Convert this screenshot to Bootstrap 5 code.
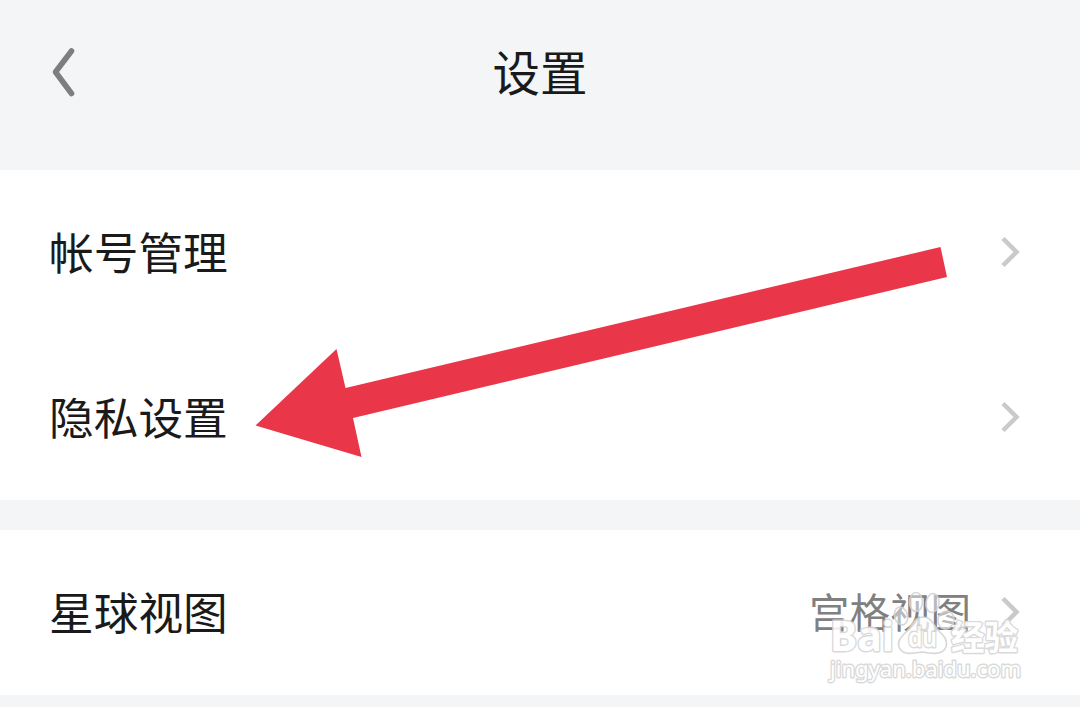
<!DOCTYPE html>
<html lang="zh-CN">

<head>
    <meta charset="UTF-8">
    <meta name="viewport" content="width=device-width, initial-scale=1.0">
    <title>设置</title>
    <link href="https://cdn.jsdelivr.net/npm/bootstrap@5.3.0/dist/css/bootstrap.min.css" rel="stylesheet">
    <style>
        body {
            background-color: #f4f5f7;
            color: #1a1a1a;
            font-family: "Noto Sans CJK SC", sans-serif;
            overflow: hidden;
        }

        .page-header {
            height: 170px;
            padding: 0 50px 24px;
        }

        .page-title {
            font-size: 47.5px;
            line-height: 70px;
            font-weight: 400;
            padding-bottom: 5px;
        }

        .side-slot {
            width: 100px;
        }

        .settings-group {
            --bs-list-group-color: #1a1a1a;
            --bs-list-group-bg: #fff;
            margin-bottom: 30px;
        }

        .settings-item {
            height: 165px;
            padding: 0 60px 2px 49px;
            border: 0;
            font-size: 44.7px;
            line-height: 66px;
        }

        .settings-item span {
            padding-bottom: 1px;
        }

        .settings-item .item-value {
            font-size: 40.5px;
            color: #808080;
            margin-right: 29px;
            padding-bottom: 2px;
        }

        .overlay {
            pointer-events: none;
            z-index: 5;
        }

        .watermark text {
            fill: #fff;
            stroke: #d6d6d6;
            stroke-width: 2.8;
            stroke-linejoin: round;
            paint-order: stroke;
            font-family: "Noto Sans", "Noto Sans CJK SC", sans-serif;
        }
    </style>
</head>

<body>
    <div class="position-relative vh-100 overflow-hidden">
        <header class="page-header d-flex align-items-center justify-content-between">
            <a href="#" class="side-slot d-flex" aria-label="返回">
                <svg width="28" height="52" viewBox="0 0 28 52" fill="none" stroke="#7d7e80" stroke-width="5.6"
                    stroke-linecap="round" stroke-linejoin="round">
                    <path d="M21.5 4L5.5 25L21.5 46.5" />
                </svg>
            </a>
            <h1 class="page-title mb-0">设置</h1>
            <div class="side-slot"></div>
        </header>

        <div class="list-group list-group-flush settings-group">
            <a href="#" class="list-group-item settings-item d-flex align-items-center justify-content-between">
                <span>帐号管理</span>
                <svg width="20" height="32" viewBox="0 0 20 32" fill="none" stroke="#cacaca" stroke-width="4.5">
                    <path d="M3 2.5L16.5 16L3 29.5" />
                </svg>
            </a>
            <a href="#" class="list-group-item settings-item d-flex align-items-center justify-content-between">
                <span>隐私设置</span>
                <svg width="20" height="32" viewBox="0 0 20 32" fill="none" stroke="#cacaca" stroke-width="4.5">
                    <path d="M3 2.5L16.5 16L3 29.5" />
                </svg>
            </a>
        </div>

        <div class="list-group list-group-flush settings-group">
            <a href="#" class="list-group-item settings-item d-flex align-items-center">
                <span class="me-auto">星球视图</span>
                <span class="item-value">宫格视图</span>
                <svg width="20" height="32" viewBox="0 0 20 32" fill="none" stroke="#cacaca" stroke-width="4.5">
                    <path d="M3 2.5L16.5 16L3 29.5" />
                </svg>
            </a>
        </div>

        <!-- arrow and watermark lie over the list -->
        <svg class="overlay position-absolute top-0 start-0" width="1080" height="707" viewBox="0 0 1080 707">
            <path fill="#e93649" d="M255.5 425.5L336.5 349L345.5 388L940.5 247L947 277L353 418L361.5 457Z" />
            <g class="watermark" opacity=".9">
                <g fill="#fff" fill-opacity=".5" stroke="#d3d3d3" stroke-width="1.6">
                    <ellipse cx="901" cy="616" rx="6.5" ry="9" transform="rotate(-15 901 616)" />
                    <ellipse cx="916" cy="602" rx="6.5" ry="9.5" />
                    <ellipse cx="932.5" cy="603" rx="6.5" ry="9.5" transform="rotate(8 932.5 603)" />
                    <ellipse cx="946" cy="620" rx="8" ry="9" transform="rotate(22 946 620)" />
                    <path fill-opacity=".8" d="M923 617C914 617 913 625 907 631C901 637 897 641 899 647C902 655 911 654 922 652C933 654 943 655 946 647C948 640 944 636 939 631C933 625 932 617 923 617Z" />
                </g>
                <text x="830" y="651" font-size="41" font-weight="700" textLength="64" lengthAdjust="spacingAndGlyphs">Bai</text>
                <text x="908" y="647" font-size="27" font-weight="600" textLength="29" lengthAdjust="spacingAndGlyphs">du</text>
                <text x="951" y="650" font-size="34" font-weight="700" textLength="67" lengthAdjust="spacingAndGlyphs">经验</text>
                <text x="830" y="677" font-size="22.5" textLength="191" lengthAdjust="spacingAndGlyphs">jingyan.baidu.com</text>
            </g>
        </svg>
    </div>

    <script src="https://cdn.jsdelivr.net/npm/bootstrap@5.3.0/dist/js/bootstrap.bundle.min.js"></script>
</body>

</html>
